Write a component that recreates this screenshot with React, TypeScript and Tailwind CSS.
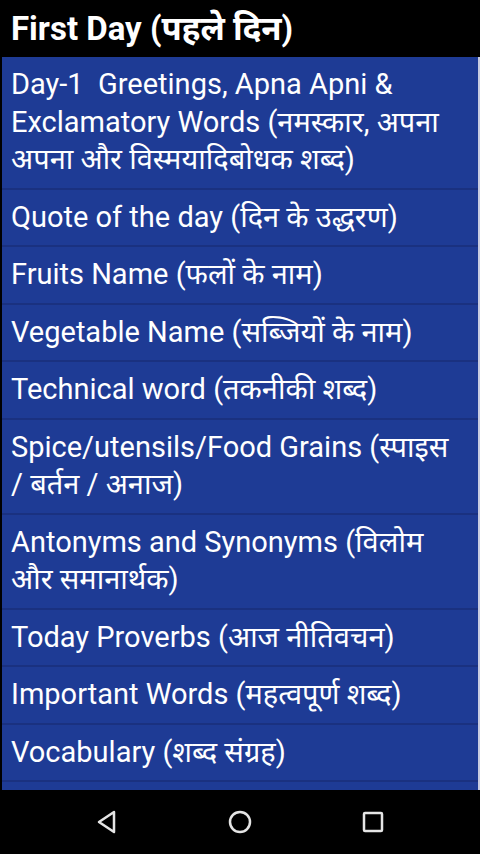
const items = [
  "Day-1  Greetings, Apna Apni & Exclamatory Words (नमस्कार, अपना अपना और विस्मयादिबोधक शब्द)",
  "Quote of the day (दिन के उद्धरण)",
  "Fruits Name (फलों के नाम)",
  "Vegetable Name (सब्जियों के नाम)",
  "Technical word (तकनीकी शब्द)",
  "Spice/utensils/Food Grains (स्पाइस / बर्तन / अनाज)",
  "Antonyms and Synonyms (विलोम और समानार्थक)",
  "Today Proverbs (आज नीतिवचन)",
  "Important Words (महत्वपूर्ण शब्द)",
  "Vocabulary (शब्द संग्रह)",
];

export default function App() {
  return (
    <div className="w-[480px] h-[854px] flex flex-col bg-black overflow-hidden font-['Roboto','Noto_Sans',sans-serif]">
      <div className="h-[57px] shrink-0 flex items-center px-[11px] text-white text-[33px] font-bold">
        First Day (पहले दिन)
      </div>
      <div className="flex-1 overflow-hidden border-l-2 border-r-2 border-l-black border-r-[#c8cce0] bg-[#1e3b95]">
        {items.map((t, i) => (
          <div key={i} className="border-b-2 border-[#1a3180] pl-[9px] pr-[14px] py-[9px] text-white text-[29px] leading-[37.5px] whitespace-pre-wrap">
            {t}
          </div>
        ))}
      </div>
      <div className="h-[64px] shrink-0 flex items-center justify-between px-[94px]">
        <svg width="26" height="26" viewBox="0 0 26 26" fill="none" stroke="#e5e5e5" strokeWidth="2.5" strokeLinejoin="round">
          <path d="M20 3 L5 13 L20 23 Z" />
        </svg>
        <svg width="26" height="26" viewBox="0 0 26 26" fill="none" stroke="#e5e5e5" strokeWidth="2.5">
          <circle cx="13" cy="13" r="10" />
        </svg>
        <svg width="26" height="26" viewBox="0 0 26 26" fill="none" stroke="#e5e5e5" strokeWidth="2.5">
          <rect x="4" y="4" width="18" height="18" rx="1" />
        </svg>
      </div>
    </div>
  );
}
